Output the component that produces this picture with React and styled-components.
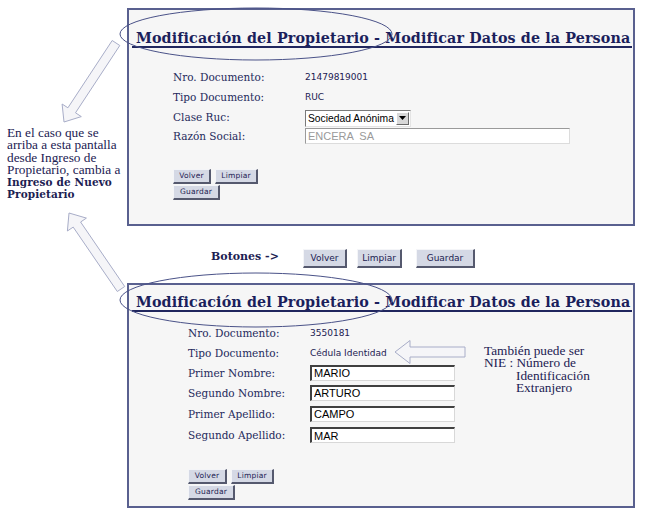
import React from "react";
import styled, { createGlobalStyle } from "styled-components";

const GlobalStyle = createGlobalStyle`
  html, body { margin: 0; padding: 0; background: #ffffff; }
  body { font-family: "DejaVu Serif", serif; color: #1c2152; }
`;

const arrowPoints = (tail, tip, shaft, head, headLen) => {
  const dx = tip[0] - tail[0];
  const dy = tip[1] - tail[1];
  const len = Math.hypot(dx, dy);
  const ux = dx / len;
  const uy = dy / len;
  const nx = -uy;
  const ny = ux;
  const bx = tip[0] - ux * headLen;
  const by = tip[1] - uy * headLen;
  const pts = [
    [tail[0] + nx * shaft / 2, tail[1] + ny * shaft / 2],
    [bx + nx * shaft / 2, by + ny * shaft / 2],
    [bx + nx * head / 2, by + ny * head / 2],
    tip,
    [bx - nx * head / 2, by - ny * head / 2],
    [bx - nx * shaft / 2, by - ny * shaft / 2],
    [tail[0] - nx * shaft / 2, tail[1] - ny * shaft / 2],
  ];
  return pts.map((p) => p[0].toFixed(1) + "," + p[1].toFixed(1)).join(" ");
};

const App = () => {
  return (
    <>
      <GlobalStyle />
      <Page>
        <Note>
          En el caso que se
          <br />
          arriba a esta pantalla
          <br />
          desde Ingreso de
          <br />
          Propietario, cambia a
          <br />
          <b>Ingreso de Nuevo</b>
          <br />
          <b>Propietario</b>
        </Note>

        <Main>
          <Panel $top={8} $height={218}>
            <Title $pad={20}>Modificación del Propietario - Modificar Datos de la Persona</Title>
            <Form $left={44} $col={132} $rows="20px 20px 19px 19px" $marginTop={19}>
              <Label>Nro. Documento:</Label>
              <Value>21479819001</Value>
              <Label>Tipo Documento:</Label>
              <Value>RUC</Value>
              <Label>Clase Ruc:</Label>
              <div>
                <SelectBox>
                  <span>Sociedad Anónima</span>
                  <SelectArrow>
                    <svg width="7" height="4" viewBox="0 0 7 4">
                      <path d="M0 0 L7 0 L3.5 4 Z" fill="#000" />
                    </svg>
                  </SelectArrow>
                </SelectBox>
              </div>
              <Label>Razón Social:</Label>
              <div>
                <TextInput $width={265} $muted readOnly value="ENCERA  SA" />
              </div>
            </Form>
            <SmallButtons $left={44} $marginTop={24}>
              <SmallButton $w={38}>Volver</SmallButton>
              <SmallButton $w={43}>Limpiar</SmallButton>
              <SmallButton $w={47}>Guardar</SmallButton>
            </SmallButtons>
          </Panel>

          <ButtonsRow>
            <RowLabel>Botones -&gt;</RowLabel>
            <BigButton $w={44}>Volver</BigButton>
            <BigButton $w={45} $gap={10}>Limpiar</BigButton>
            <BigButton $w={59} $gap={14}>Guardar</BigButton>
          </ButtonsRow>

          <Panel $top={0} $height={225}>
            <Title $pad={9}>Modificación del Propietario - Modificar Datos de la Persona</Title>
            <Form $left={59} $col={122} $rows="20px 20px 19px 21px 21px 22px" $marginTop={11}>
              <Label>Nro. Documento:</Label>
              <Value>3550181</Value>
              <Label>Tipo Documento:</Label>
              <Value>Cédula Identidad</Value>
              <Label>Primer Nombre:</Label>
              <div>
                <TextInput $width={145} readOnly value="MARIO" />
              </div>
              <Label>Segundo Nombre:</Label>
              <div>
                <TextInput $width={145} readOnly value="ARTURO" />
              </div>
              <Label>Primer Apellido:</Label>
              <div>
                <TextInput $width={145} readOnly value="CAMPO" />
              </div>
              <Label>Segundo Apellido:</Label>
              <div>
                <TextInput $width={145} readOnly value="MAR" />
              </div>
            </Form>
            <SideNote>
              También puede ser
              <br />
              NIE : Número de
              <br />
              <Indent>Identificación</Indent>
              <br />
              <Indent>Extranjero</Indent>
            </SideNote>
            <SmallButtons $left={59} $marginTop={23}>
              <SmallButton $w={39}>Volver</SmallButton>
              <SmallButton $w={43}>Limpiar</SmallButton>
              <SmallButton $w={47}>Guardar</SmallButton>
            </SmallButtons>
          </Panel>
        </Main>

        <Overlay width="645" height="530" viewBox="0 0 645 530">
          <ellipse cx="256" cy="34" rx="136" ry="26" fill="none" stroke="#4a5288" strokeWidth="1" />
          <ellipse cx="256" cy="300" rx="136" ry="27" fill="none" stroke="#4a5288" strokeWidth="1" />
          <polygon
            points={arrowPoints([116, 43], [64, 122], 9, 23, 14)}
            fill="#f5f5f8"
            stroke="#a8adc8"
            strokeWidth="1"
          />
          <polygon
            points={arrowPoints([121, 289], [69, 213], 9, 23, 14)}
            fill="#f5f5f8"
            stroke="#a8adc8"
            strokeWidth="1"
          />
          <polygon
            points={arrowPoints([465, 352], [395, 352], 10, 23, 15)}
            fill="#f5f5f8"
            stroke="#a8adc8"
            strokeWidth="1"
          />
        </Overlay>
      </Page>
    </>
  );
};

export default App;

const Page = styled.div`
  position: relative;
  width: 645px;
  height: 530px;
  display: grid;
  grid-template-columns: 127px 508px;
  overflow: hidden;
`;

const Note = styled.div`
  padding: 127px 0 0 7px;
  font-family: "Liberation Serif", serif;
  font-size: 13.3px;
  line-height: 12.3px;
  color: #1c2152;
  white-space: nowrap;
  b {
    font-family: "DejaVu Serif", serif;
    font-size: 10.5px;
    letter-spacing: 0.1px;
  }
`;

const Main = styled.div`
  display: flex;
  flex-direction: column;
`;

const Panel = styled.section`
  position: relative;
  box-sizing: border-box;
  margin-top: ${(p) => p.$top}px;
  height: ${(p) => p.$height}px;
  border: 2px solid #59608f;
  background: #f6f6f6;
  display: flex;
  flex-direction: column;
`;

const Title = styled.h1`
  margin: 0 1px 0 3px;
  padding: ${(p) => p.$pad}px 0 0 4px;
  font-family: "DejaVu Serif", serif;
  font-size: 14.3px;
  font-weight: bold;
  line-height: 16px;
  letter-spacing: 0.12px;
  color: #1b1f5c;
  white-space: nowrap;
  border-bottom: 2px solid #20265e;
`;

const Form = styled.div`
  display: grid;
  grid-template-columns: ${(p) => p.$col}px auto;
  grid-template-rows: ${(p) => p.$rows};
  align-items: center;
  margin: ${(p) => p.$marginTop}px 0 0 ${(p) => p.$left}px;
`;

const Label = styled.div`
  font-family: "DejaVu Serif", serif;
  font-size: 10.5px;
  letter-spacing: 0;
  color: #252a5c;
  white-space: nowrap;
`;

const Value = styled.div`
  font-family: "DejaVu Sans", sans-serif;
  font-size: 9px;
  color: #1c2152;
  white-space: nowrap;
`;

const SelectBox = styled.div`
  display: inline-flex;
  align-items: center;
  box-sizing: border-box;
  height: 17px;
  width: 106px;
  padding-left: 2px;
  background: #ffffff;
  border: 1px solid;
  border-color: #7a7a7a #e4e4e4 #e4e4e4 #7a7a7a;
  font-family: "Liberation Sans", sans-serif;
  font-size: 10.3px;
  color: #000;
  span {
    flex: 1;
    white-space: nowrap;
    overflow: hidden;
  }
`;

const SelectArrow = styled.div`
  display: flex;
  align-items: center;
  justify-content: center;
  box-sizing: border-box;
  width: 13px;
  height: 13px;
  margin-right: 1px;
  background: #d8d8d8;
  border: 1px solid;
  border-color: #ffffff #6a6a6a #6a6a6a #ffffff;
`;

const TextInput = styled.input`
  display: block;
  box-sizing: border-box;
  width: ${(p) => p.$width}px;
  height: 16px;
  margin: 0;
  padding: 0 2px;
  background: #ffffff;
  border: 1px solid;
  border-color: ${(p) => (p.$muted ? "#9a9a9a #dcdcdc #dcdcdc #9a9a9a" : "#404040 #d8d8d8 #d8d8d8 #404040")};
  border-width: ${(p) => (p.$muted ? "1px" : "2px 1px 1px 2px")};
  font-family: "Liberation Sans", sans-serif;
  font-size: 11px;
  color: ${(p) => (p.$muted ? "#9a9a9a" : "#000000")};
  outline: none;
`;

const SmallButtons = styled.div`
  display: flex;
  flex-wrap: wrap;
  gap: 1px 4px;
  width: 90px;
  margin: ${(p) => p.$marginTop}px 0 0 ${(p) => p.$left}px;
`;

const SmallButton = styled.button`
  box-sizing: border-box;
  width: ${(p) => p.$w}px;
  height: 15px;
  padding: 0;
  background: #d5d9e5;
  border: 1px solid;
  border-width: 1px 2px 2px 1px;
  border-color: #f4f5f8 #55596e #55596e #f4f5f8;
  font-family: "DejaVu Sans", sans-serif;
  font-size: 7.5px;
  letter-spacing: 0.2px;
  color: #1c2152;
  line-height: 12px;
`;

const ButtonsRow = styled.div`
  display: flex;
  align-items: center;
  box-sizing: border-box;
  height: 57px;
  padding-top: 8px;
  margin-left: 84px;
`;

const RowLabel = styled.div`
  font-family: "DejaVu Serif", serif;
  font-size: 11px;
  font-weight: bold;
  color: #1c2152;
  width: 92px;
  padding-bottom: 4px;
`;

const BigButton = styled.button`
  box-sizing: border-box;
  width: ${(p) => p.$w}px;
  height: 19px;
  margin-left: ${(p) => p.$gap || 0}px;
  padding: 0;
  background: #d5d9e5;
  border: 1px solid;
  border-color: #f4f5f8 #55596e #55596e #f4f5f8;
  border-width: 1px 2px 2px 1px;
  font-family: "DejaVu Sans", sans-serif;
  font-size: 9px;
  color: #1c2152;
`;

const SideNote = styled.div`
  position: absolute;
  left: 355px;
  top: 60px;
  font-family: "Liberation Serif", serif;
  font-size: 13.3px;
  line-height: 12.3px;
  color: #1c2152;
  white-space: nowrap;
`;

const Indent = styled.span`
  padding-left: 32px;
`;

const Overlay = styled.svg`
  position: absolute;
  left: 0;
  top: 0;
  pointer-events: none;
`;
